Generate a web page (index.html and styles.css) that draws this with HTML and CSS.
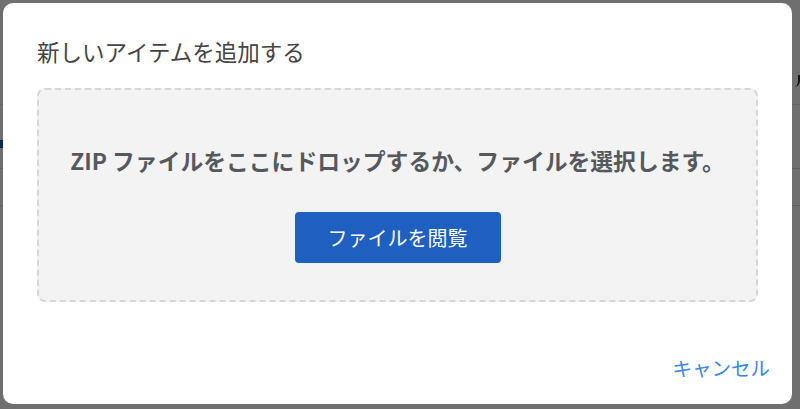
FILE: index.html
```html
<!DOCTYPE html>
<html lang="ja">
<head>
    <meta charset="utf-8">
    <title>新しいアイテムを追加する</title>
    <link rel="stylesheet" href="styles.css">
</head>
<body>
    <div class="page">
        <div class="page-head"><span class="page-tab"></span></div>
        <div class="page-row"><span class="page-mark"></span></div>
        <div class="page-row"></div>
    </div>

    <div class="backdrop">
        <div class="dialog">
            <h1 class="dialog-title">新しいアイテムを追加する</h1>

            <div class="dropzone">
                <p class="drop-text">ZIP ファイルをここにドロップするか、ファイルを選択します。</p>
                <button class="browse">ファイルを閲覧</button>
            </div>

            <div class="dialog-footer">
                <button class="cancel">キャンセル</button>
            </div>
        </div>
    </div>
</body>
</html>
```

FILE: styles.css
```css
html, body {
    margin: 0;
    height: 100%;
}
body {
    font-family: "Noto Sans CJK JP", "Noto Sans", sans-serif;
    background-color: #fff;
    position: relative;
    overflow: hidden;
}
.page {
    height: 100%;
}
.page-head {
    height: 104px;
    border-bottom: 1px solid #e6e6e6;
    display: flex;
    justify-content: flex-end;
    align-items: flex-start;
}
.page-tab {
    width: 5px;
    height: 12px;
    margin-top: 75px;
    border-right: 2px solid #333;
    border-bottom-right-radius: 6px;
}
.page-row {
    height: 63px;
    border-bottom: 1px solid #ddd;
    position: relative;
}
.page-mark {
    position: absolute;
    left: 0;
    top: 35px;
    width: 3px;
    height: 8px;
    background-color: #1f5fbf;
}
.page-row + .page-row {
    height: 36px;
}

/* modal */
.backdrop {
    position: absolute;
    inset: 0;
    background-color: rgba(0, 0, 0, 0.565);
    padding: 3px 8px 5px 3px;
    box-sizing: border-box;
    display: flex;
}
.dialog {
    flex: 1;
    background-color: #fff;
    border-radius: 10px;
    padding: 0 34px;
    display: flex;
    flex-direction: column;
}
.dialog-title {
    margin: 0;
    padding: 33px 0 22px;
    font-size: 22.5px;
    line-height: 30px;
    font-weight: 400;
    color: #444;
}
.dropzone {
    border: 2px dashed #d6d6d6;
    border-radius: 8px;
    background-color: #f3f3f3;
    padding: 56px 10px 37px;
    display: flex;
    flex-direction: column;
    align-items: center;
}
.drop-text {
    margin: 0 0 36px;
    font-size: 22.8px;
    line-height: 30px;
    font-weight: 700;
    color: #55595e;
}
.browse {
    width: 206px;
    height: 51px;
    border: none;
    border-radius: 4px;
    background-color: #1f5fbf;
    color: #fff;
    font-family: inherit;
    font-size: 20px;
    cursor: pointer;
}
.dialog-footer {
    flex: 1;
    display: flex;
    justify-content: flex-end;
    align-items: flex-end;
    padding-bottom: 23px;
    margin-right: -12px;
}
.cancel {
    border: none;
    background: none;
    padding: 0;
    font-family: inherit;
    font-size: 19.5px;
    line-height: 26px;
    color: #3b86e6;
    cursor: pointer;
}
```
